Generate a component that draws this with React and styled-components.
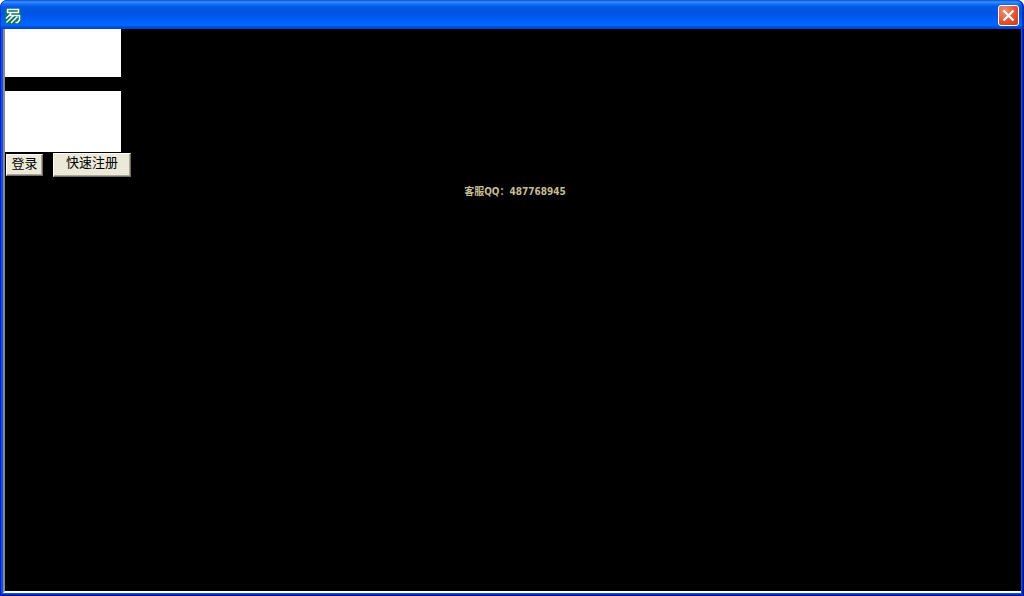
import styled, { createGlobalStyle } from 'styled-components';

export default function App() {
  return (
    <Window>
      <GlobalStyle />

      <TitleBar>
        <AppIcon />
        <CloseButton type="button" aria-label="关闭">
          <svg width="13" height="13" viewBox="0 0 13 13" aria-hidden="true">
            <path d="M1.5 1.5 11.5 11.5M11.5 1.5 1.5 11.5" stroke="#fff" strokeWidth="2.2" />
          </svg>
        </CloseButton>
      </TitleBar>

      <Frame>
        <Client>
          <form onSubmit={(event) => event.preventDefault()}>
            <Fields>
              <Input type="text" aria-label="账号" $height={48} />
              <Input type="password" aria-label="密码" $height={61} />
            </Fields>

            <ButtonRow>
              <Button type="submit" $width={37} $height={22}>登录</Button>
              <Button type="button" $width={78} $height={24}>快速注册</Button>
            </ButtonRow>
          </form>

          <Contact>客服QQ：487768945</Contact>
        </Client>
      </Frame>
    </Window>
  );
}

function AppIcon() {
  return (
    <svg width="16" height="16" viewBox="0 0 16 16" fill="none" aria-hidden="true">
      <rect width="16" height="16" rx="2" fill="#08736b" />
      <g stroke="#fff" strokeWidth="1.5">
        <path d="M2 1.5H13.5V4.5H2.5V1.5" />
        <path d="M5.5 4.5V6L1 10.5M4 7.5H14.5V12L12.5 14.5H10.5" />
        <path d="M8.5 7.5 1.5 14.5M12.5 8.5 6 15" />
      </g>
    </svg>
  );
}

const GlobalStyle = createGlobalStyle`
  * {
    box-sizing: border-box;
  }

  body {
    margin: 0;
    background: #fff;
    font-family: "Liberation Sans", "Noto Sans CJK SC", sans-serif;
  }
`;

const Window = styled.div`
  display: flex;
  flex-direction: column;
  min-height: 100vh;
  overflow: hidden;
  border-radius: 7px 7px 0 0;
  background: #0048e0;
`;

const TitleBar = styled.header`
  display: flex;
  align-items: center;
  justify-content: space-between;
  height: 29px;
  padding: 2px 5px 0;
  border-radius: 7px 7px 0 0;
  background: linear-gradient(
    #0450d0 0,
    #3b90ff 2px,
    #1470f4 4px,
    #0058e4 7px,
    #0054e3 14px,
    #0060fc 21px,
    #0068ff 25px,
    #0050e0 27px,
    #0040c8 29px
  );
  box-shadow: inset 1px 0 #0038d0, inset -2px 0 #0030b8;
`;

const CloseButton = styled.button`
  display: flex;
  align-items: center;
  justify-content: center;
  width: 21px;
  height: 21px;
  padding: 0;
  border: 1px solid #fff;
  border-radius: 3px;
  background: radial-gradient(circle at 30% 25%, #f09078, #e25431 55%, #c83c14);
`;

const Frame = styled.div`
  display: flex;
  flex: 1;
  padding: 0 3px 3px;
  background: #0b50e8;
  box-shadow: inset 1px 0 #0019cf, inset -1px 0 #00138c, inset -2px 0 #0030c0,
    inset 0 -1px #00138c, inset 0 -2px #0030c0;
`;

const Client = styled.main`
  flex: 1;
  border-left: 2px solid #8c8a80;
  border-bottom: 2px solid #fff;
  background: #000;
`;

const Fields = styled.div`
  display: flex;
  flex-direction: column;
  align-items: flex-start;
  gap: 14px;
`;

const Input = styled.input`
  width: 116px;
  height: ${({ $height }) => $height}px;
  padding: 0 4px;
  border: none;
  border-radius: 0;
  background: #fff;
  font-size: 13px;
`;

const ButtonRow = styled.div`
  display: flex;
  align-items: center;
  gap: 10px;
  padding: 1px 1px 0;
`;

const Button = styled.button`
  display: flex;
  justify-content: center;
  width: ${({ $width }) => $width}px;
  height: ${({ $height }) => $height}px;
  padding: 0;
  border: 1px solid;
  border-color: #fff #716f64 #716f64 #fff;
  box-shadow: inset -1px -1px #aca899;
  background: #ece9d8;
  color: #000;
  font-family: "Noto Sans CJK SC", sans-serif;
  font-size: 13px;
  line-height: 16px;
`;

const Contact = styled.p`
  margin: 9px 0 0 4px;
  color: #c4bc94;
  font-family: "DejaVu Sans Condensed", "Noto Sans CJK SC", sans-serif;
  font-size: 10px;
  font-weight: 700;
  line-height: 12px;
  text-align: center;
`;
